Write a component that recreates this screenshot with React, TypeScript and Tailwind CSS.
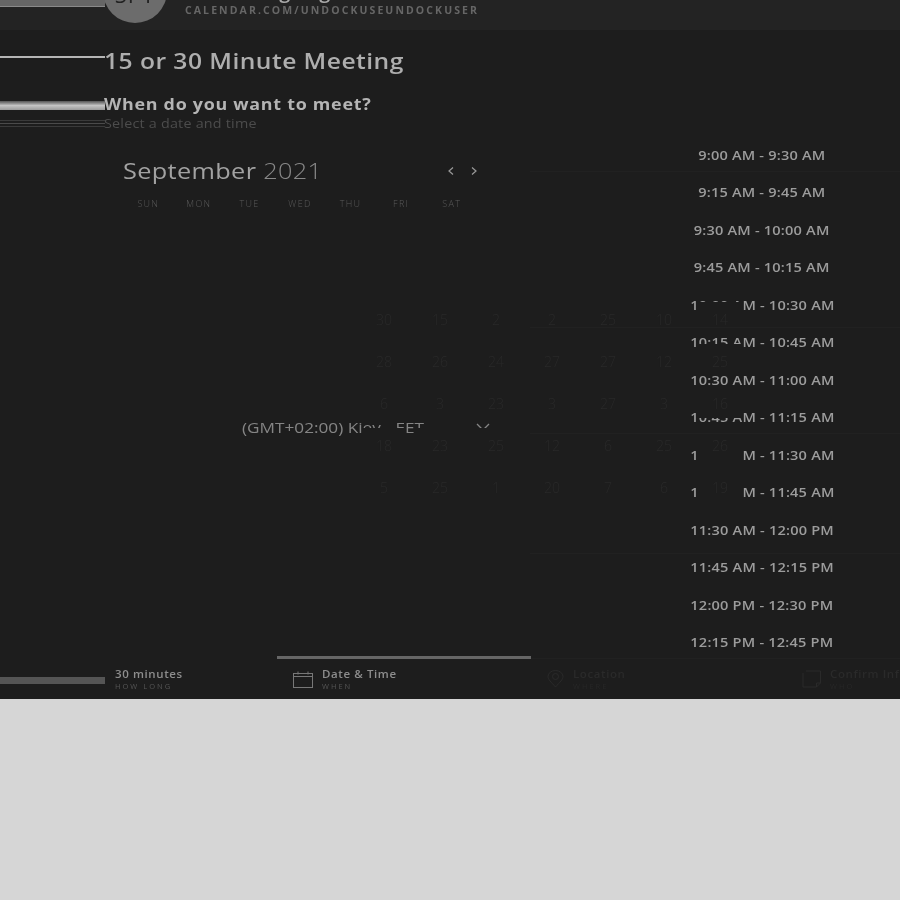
const times = [
  "9:00 AM - 9:30 AM",
  "9:15 AM - 9:45 AM",
  "9:30 AM - 10:00 AM",
  "9:45 AM - 10:15 AM",
  "10:00 AM - 10:30 AM",
  "10:15 AM - 10:45 AM",
  "10:30 AM - 11:00 AM",
  "10:45 AM - 11:15 AM",
  "11:00 AM - 11:30 AM",
  "11:15 AM - 11:45 AM",
  "11:30 AM - 12:00 PM",
  "11:45 AM - 12:15 PM",
  "12:00 PM - 12:30 PM",
  "12:15 PM - 12:45 PM",
]

const days = ["SUN", "MON", "TUE", "WED", "THU", "FRI", "SAT"]

const cells = [
  30, 15, 2, 2, 25, 10, 14,
  28, 26, 24, 27, 27, 12, 25,
  6, 3, 23, 3, 27, 3, 16,
  18, 23, 25, 12, 6, 25, 26,
  5, 25, 1, 20, 7, 6, 19,
]

const rowLines = [171, 327, 433, 553]

const Tab = ({ title, sub, active, dim, icon, className }: { title: string; sub: string; active?: boolean; dim?: boolean; icon?: React.ReactNode; className: string }) => (
  <div className={`flex h-full shrink-0 items-center gap-[9px] pt-[1px] ${className}`}>
    {icon}
    <div className="flex flex-col">
      <span className={`whitespace-nowrap text-[11.5px] font-semibold leading-[14px] tracking-[0.6px] ${dim ? "text-[#2a2a2a]" : "text-[#8d8d8d]"}`}>{title}</span>
      <span className={`text-[7.5px] leading-[10px] tracking-[2px] ${dim ? "text-[#272727]" : "text-[#555555]"}`}>{sub}</span>
    </div>
    {active && <div className="absolute left-[277px] top-[656px] h-[3px] w-[254px] bg-[#666666]" />}
  </div>
)

export default function App() {
  return (
    <div className="h-[900px] w-[900px] overflow-hidden bg-[#d6d6d6] font-['Open_Sans',sans-serif] grayscale">
      <div className="relative flex h-[699px] flex-col overflow-hidden bg-[#1d1d1d]">
        {/* header, pushed up past the top of the page */}
        <div className="flex h-[30px] shrink-0 items-end gap-[18px] bg-[#232323] pl-[103px]">
          <div className="mb-[7px] flex h-[64px] w-[64px] shrink-0 items-center justify-center rounded-full bg-[#6c6c6c] pt-[7px] text-[22px] tracking-[1px] text-[#222222]">
            SPT
          </div>
          <div className="mb-[13px] flex flex-col">
            <span className="whitespace-nowrap text-[20px] font-semibold leading-[27px] text-[#aaaaaa]">Scheduling Page</span>
            <span className="whitespace-nowrap text-[10.5px] font-bold leading-[13px] tracking-[2.09px] text-[#666666]">CALENDAR.COM/UNDOCKUSEUNDOCKUSER</span>
          </div>
        </div>

        <div className="flex min-h-0 flex-1">
          <div className="flex w-[530px] shrink-0 flex-col pl-[104px]">
            <h1 className="mt-[14px] origin-left scale-x-[1.12] whitespace-nowrap text-[22px] font-semibold leading-[32px] tracking-[0.4px] text-[#aeaeae]">15 or 30 Minute Meeting</h1>
            <h2 className="mt-[17px] origin-left scale-x-[1.117] whitespace-nowrap text-[16px] font-bold leading-[22px] tracking-[0.65px] text-[#b4b4b4]">When do you want to meet?</h2>
            <p className="origin-left scale-x-[1.063] whitespace-nowrap text-[13.5px] leading-[16px] tracking-[0.2px] text-[#4c4c4c]">Select a date and time</p>

            <div className="ml-[19px] mt-[24px] flex w-[358px] items-center justify-between">
              <div className="origin-left scale-x-[1.15] whitespace-nowrap text-[22px] leading-[30px] tracking-[0.3px] text-[#a2a2a2]">
                September <span className="font-light text-[#888888]">2021</span>
              </div>
              <div className="mt-[2px] flex items-center gap-[11px] pr-[1px]">
                <svg width="12" height="12" viewBox="0 0 12 12" fill="none" stroke="#9a9a9a" strokeWidth="1.2"><path d="M8 2.500 4 6l4 3.500" /></svg>
                <svg width="12" height="12" viewBox="0 0 12 12" fill="none" stroke="#9a9a9a" strokeWidth="1.2"><path d="m4 2.500 4 3.500-4 3.500" /></svg>
              </div>
            </div>
            <div className="ml-[19px] mt-[12px] grid w-[354px] grid-cols-7 text-center text-[9px] font-light leading-[14px] tracking-[1.3px] text-[#5a5a5a]">
              {days.map((d) => <span key={d}>{d}</span>)}
            </div>

            <div className="ml-[138px] mt-[206px] flex items-center gap-[74px] text-[15px] leading-[20px] text-[#858585]">
              <span className="w-[160px] origin-left scale-x-[1.146] whitespace-nowrap">(GMT+02:00) Kiev, <span className="ml-[5px]">EET</span></span>
              <svg width="14" height="10" viewBox="0 0 14 10" fill="none" stroke="#858585" strokeWidth="1.3"><path d="m1 2 6 6 6-6" /></svg>
            </div>
          </div>

          <div className="flex flex-1 flex-col pt-[106.500px]">
            {times.map((t) => (
              <div key={t} className="flex h-[37.5px] shrink-0 items-center justify-center pl-[94px]">
                <span className="scale-x-[1.12] whitespace-nowrap text-[13px] font-semibold tracking-[0.18px] text-[#9c9c9c]">{t}</span>
              </div>
            ))}
          </div>
        </div>

        <div className="flex h-[41px] shrink-0">
          <Tab title="30 minutes" sub="HOW LONG" className="w-[277px] pl-[115px]" />
          <Tab
            title="Date & Time"
            sub="WHEN"
            active
            className="w-[254px] pl-[16px]"
            icon={
              <svg width="20" height="17" viewBox="0 0 20 17" fill="none" stroke="#777777" strokeWidth="1"><rect x="0.5" y="2.5" width="19" height="14" /><path d="M0.5 5.5h19M5 0.5v3M15 0.5v3" /></svg>
            }
          />
          <Tab
            title="Location"
            sub="WHERE"
            dim
            className="w-[254px] pl-[16px]"
            icon={
              <svg width="17" height="18" viewBox="0 0 17 18" fill="none" stroke="#2a2a2a" strokeWidth="1"><path d="M8.5 17C4 12 1 9.5 1 6.5a7.5 6 0 0 1 15 0C16 9.5 13 12 8.5 17Z" /><circle cx="8.5" cy="6.5" r="3" /></svg>
            }
          />
          <Tab
            title="Confirm Info"
            sub="WHO"
            dim
            className="w-[254px] pl-[17px]"
            icon={
              <svg width="19" height="18" viewBox="0 0 19 18" fill="none" stroke="#2a2a2a" strokeWidth="1"><path d="M4 1h14.500v12l-4 4H1V3M14.500 17v-4h4" /></svg>
            }
          />
        </div>

        {/* calendar cells sit on top of the times and the timezone line */}
        <div className="absolute left-[362px] top-[302px] grid auto-rows-[32px] grid-cols-[repeat(7,44px)] gap-x-[12px] gap-y-[10px]">
          {cells.map((n, i) => (
            <div key={i} className="flex items-center justify-center bg-[#1d1d1d] pt-[2px] text-[14px] font-light text-[#292929]">{n}</div>
          ))}
        </div>

        {/* row lines of the time list */}
        {rowLines.map((y, i) => (
          <div key={y} className={`absolute right-0 h-px w-[370px] bg-[#212121] ${i === 0 ? "top-[171px]" : i === 1 ? "top-[327px]" : i === 2 ? "top-[433px]" : "top-[553px]"}`} />
        ))}
        <div className="absolute left-[531px] right-0 top-[658px] h-px bg-[#212121]" />

        {/* smeared bars at the left edge */}
        <div className="absolute left-0 top-0 h-[7px] w-[105px] border-b border-[#8a8a8a] bg-[#666666]" />
        <div className="absolute left-0 top-[56px] h-[2px] w-[105px] bg-[#b5b5b5]" />
        <div className="absolute left-0 top-[101px] h-[9px] w-[105px] bg-gradient-to-b from-[#555555] via-[#c4c4c4] to-[#9a9a9a]" />
        <div className="absolute left-0 top-[120px] h-px w-[105px] bg-[#3a3a3a]" />
        <div className="absolute left-0 top-[123px] h-px w-[105px] bg-[#4a4a4a]" />
        <div className="absolute left-0 top-[126px] h-px w-[105px] bg-[#3a3a3a]" />
        <div className="absolute left-0 top-[677px] h-[7px] w-[105px] bg-[#555555]" />
      </div>
    </div>
  )
}
